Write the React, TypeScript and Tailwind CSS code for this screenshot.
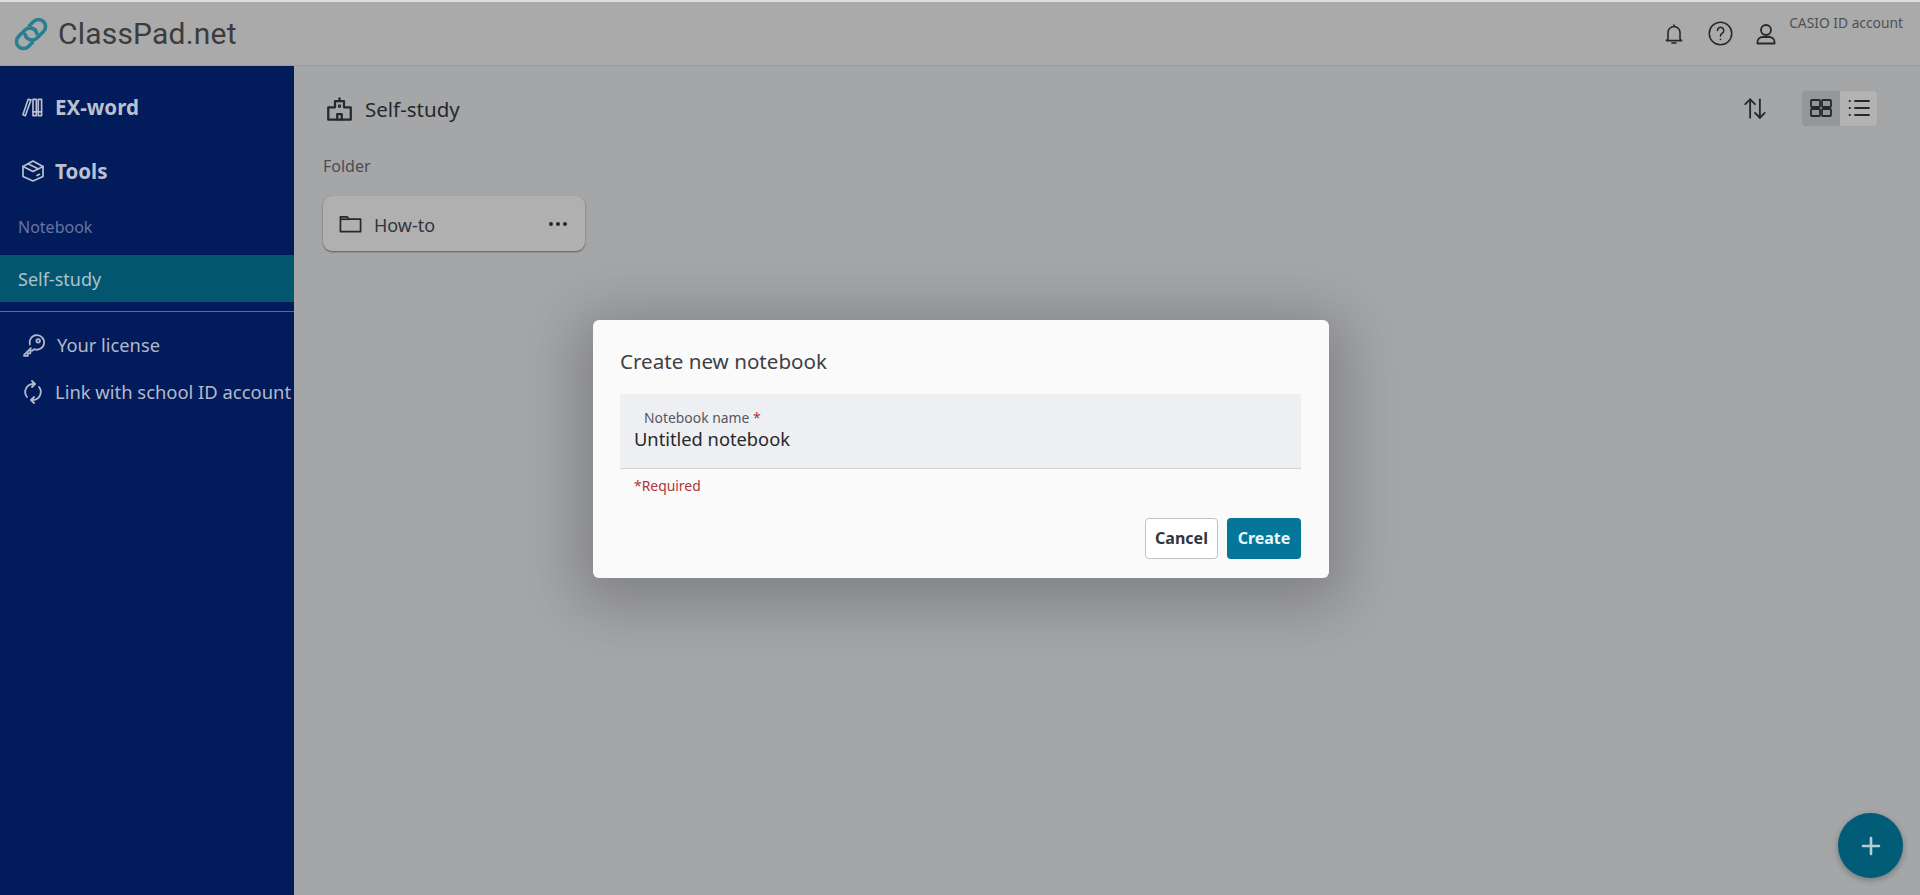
import React from "react";

const Stroke = ({ children, className, vb = "0 0 24 24", sw = 1.6 }: { children: React.ReactNode; className: string; vb?: string; sw?: number }) => (
  <svg viewBox={vb} className={className} fill="none" stroke="currentColor" strokeWidth={sw} strokeLinecap="round" strokeLinejoin="round">{children}</svg>
);

function Logo() {
  return (
    <svg viewBox="0 0 34 34" className="h-[34px] w-[34px] shrink-0" fill="none" stroke="#287f8d" strokeWidth="3.600" strokeLinecap="round">
      <path d="M15.500 8.500 L19.500 4.500 A7 7 0 0 1 29.500 14.500 L23 21 A7 7 0 0 1 11.100 17.300" />
      <path d="M18.500 25.500 L14.500 29.500 A7 7 0 0 1 4.500 19.500 L11 13 A7 7 0 0 1 22.900 16.700" />
    </svg>
  );
}

export default function App() {
  return (
    <div className="relative flex h-[895px] w-[1920px] flex-col overflow-hidden bg-[#a5a6a8] font-['Noto_Sans',sans-serif] text-[#26282c]">
      <header className="flex h-[66px] shrink-0 items-center border-t-2 border-b border-t-[#dddddd] border-b-[#9b9c9e] bg-[#aaaaab] pl-[14px]">
        <Logo />
        <span className="ml-[10px] font-['Roboto',sans-serif] text-[30px] leading-none tracking-[0.2px] text-[#3b3c3e]">ClassPad.net</span>
        <div className="ml-auto flex items-center pr-[17px]">
          <Stroke className="h-[24px] w-[24px]">
            <path d="M6 17V10.500a6 6 0 0 1 12 0V17l1.600 1.600H4.400L6 17Z" /><path d="M10 21h4" /><path d="M12 3v1.400" />
          </Stroke>
          <Stroke className="ml-[21px] h-[27px] w-[27px]" sw={1.4}>
            <circle cx="12" cy="12" r="10" /><path d="M9.300 9.300a2.800 2.800 0 1 1 4.300 2.400c-1 .7-1.600 1.300-1.600 2.500" /><path d="M12 17.200v.1" />
          </Stroke>
          <Stroke className="ml-[20px] h-[24px] w-[24px]" sw={1.8}>
            <circle cx="12" cy="8" r="5" /><path d="M3.500 21.500v-1.500c0-3 2.500-5 5-5h7c2.500 0 5 2 5 5v1.500Z" />
          </Stroke>
          <span className="mb-[22px] ml-[11px] text-[13.800px] leading-5 text-[#4f5053]">CASIO ID account</span>
        </div>
      </header>

      <div className="flex min-h-0 flex-1">
        <aside className="flex w-[294px] shrink-0 flex-col bg-[#021c5b]">
          <div className="mt-[26px] flex h-[30px] items-center pl-[21px] text-[#bac0ce]">
            <Stroke className="h-[23px] w-[23px]" sw={1.700}>
              <path d="M7.500 3.500 2 19.500l2.500 1 6-16.500-3-.5Z" /><path d="M12.500 3.500h3.500v17h-3.500Z" /><path d="M18 3.500h3.500v17H18Z" /><path d="M12.500 16.500h9" />
            </Stroke>
            <span className="ml-[11px] text-[20.500px] font-bold leading-none">EX-word</span>
          </div>
          <div className="mt-[34px] flex h-[30px] items-center pl-[21px] text-[#bac0ce]">
            <Stroke className="h-[24px] w-[24px]" sw={1.700}>
              <path d="M12 2 22 7.500v10L12 22 2 17.500v-10L12 2Z" /><path d="M2 7.500 12 12.500 22 7.500" /><path d="M7 4.800l10 5" /><path d="M16 16.500l2.500-1.200" />
            </Stroke>
            <span className="ml-[10px] text-[20.500px] font-bold leading-none">Tools</span>
          </div>
          <div className="mt-[29px] h-[24px] pl-[18px] text-[16px] leading-6 text-[#6676a0]">Notebook</div>
          <div className="mt-[16px] flex h-[47px] items-center bg-[#03566f] pl-[18px] pt-[2px] text-[18px] text-[#aec2cb]">Self-study</div>
          <div className="mt-[9px] h-px bg-[#5c6c92]" />
          <div className="mt-[18px] flex h-[30px] items-center pl-[21px] text-[#b4b9c9]">
            <Stroke className="h-[25px] w-[25px]" sw={1.700}>
              <path d="M9.500 14.500 3 21v1h3.500v-2.500H9v-2.500h2l1.500-1.500a7 7 0 1 0-4-4.500" /><circle cx="16.500" cy="7.500" r="1.700" />
            </Stroke>
            <span className="ml-[11px] text-[18.300px] leading-none">Your license</span>
          </div>
          <div className="mt-[17px] flex h-[30px] items-center pl-[21px] text-[#b4b9c9]">
            <Stroke className="h-[24px] w-[24px]" sw={1.800}>
              <path d="M6 17a8 8 0 0 1 6-13l1.500 0" /><path d="M11 1l3 3-3 3" /><path d="M18 7a8 8 0 0 1-6 13l-1.500 0" /><path d="M13 23l-3-3 3-3" />
            </Stroke>
            <span className="ml-[10px] whitespace-nowrap text-[18.400px] leading-none">Link with school ID account</span>
          </div>
        </aside>

        <main className="flex min-w-0 flex-1 flex-col pl-[29px] pr-[42px]">
          <div className="mt-[27px] flex h-[30px] items-center">
            <Stroke className="ml-[3px] mt-[2px] h-[27px] w-[27px]" sw={2}>
              <path d="M2 21V10h6V4.500h8V10h6v11H2Z" /><path d="M10 21v-5h4v5" /><path d="M12 4.500V2" /><circle cx="12" cy="9" r=".6" />
            </Stroke>
            <span className="ml-[12px] mt-[2px] text-[20.500px] leading-none">Self-study</span>
            <Stroke className="ml-auto h-[26px] w-[26px]" sw={1.700}>
              <path d="M7.500 21V4" /><path d="M3 8.500 7.500 4 12 8.500" /><path d="M16.500 4v17" /><path d="M12 16.500l4.500 4.500 4.500-4.500" />
            </Stroke>
            <div className="ml-[33px] flex h-[37px] w-[77px] overflow-hidden rounded-[5px] border border-[#a0a1a3]">
              <div className="flex w-[38px] items-center justify-center bg-[#959698]">
                <Stroke className="h-[24px] w-[24px]" sw={1.800}>
                  <rect x="2" y="4" width="9" height="7" rx="1" /><rect x="13" y="4" width="9" height="7" rx="1" /><rect x="2" y="13" width="9" height="7" rx="1" /><rect x="13" y="13" width="9" height="7" rx="1" />
                </Stroke>
              </div>
              <div className="flex flex-1 items-center justify-center bg-[#b3b3b4]">
                <Stroke className="h-[24px] w-[24px]" sw={1.800}>
                  <path d="M8 5h14M8 12h14M8 19h14" /><path d="M2.500 5h.5M2.500 12h.5M2.500 19h.5" />
                </Stroke>
              </div>
            </div>
          </div>
          <div className="mt-[32px] h-[22px] text-[16px] leading-[22px] text-[#4c4d4f]">Folder</div>
          <div className="mt-[19px] flex h-[55px] w-[262px] items-center rounded-[9px] bg-[#b0b0b1] pl-[16px] pr-[18px] pt-[3px] shadow-[0_1px_2px_rgba(0,0,0,0.45)]">
            <svg viewBox="0 0 24 20" className="mb-[2px] h-[20px] w-[23px]" fill="none" stroke="currentColor" strokeWidth="1.800" strokeLinejoin="round">
              <path d="M1.500 18V2.500h7l2 2.500h12v13Z" /><path d="M1.500 5h9" />
            </svg>
            <span className="ml-[12px] text-[18px] leading-none text-[#33353a]">How-to</span>
            <div className="ml-auto mb-[3px] flex gap-[3px]">
              <span className="h-[4px] w-[4px] rounded-full bg-[#26282c]" />
              <span className="h-[4px] w-[4px] rounded-full bg-[#26282c]" />
              <span className="h-[4px] w-[4px] rounded-full bg-[#26282c]" />
            </div>
          </div>
        </main>
      </div>

      <div className="absolute inset-0 flex items-center justify-center pl-[2px] pt-[3px]">
        <div className="flex h-[258px] w-[736px] flex-col rounded-[6px] bg-[#fafafb] pl-[27px] pr-[28px] shadow-[0_12px_60px_16px_rgba(0,0,0,0.22)]">
          <h2 className="mt-[27px] text-[20.600px] font-normal leading-[28px] text-[#3f4145]">Create new notebook</h2>
          <div className="mt-[19px] flex h-[75px] flex-col border-b border-[#d3d4d8] bg-[#eeeff3] pl-[14px] pt-[14px]">
            <div className="pl-[10px] text-[13.900px] leading-[19px] text-[#55575c]">Notebook name <span className="text-[#b0353b]">*</span></div>
            <div className="text-[18.300px] leading-[23px] text-[#26282c]">Untitled notebook</div>
          </div>
          <div className="mt-[7px] pl-[14px] text-[13.900px] leading-5 text-[#b0353b]">*Required</div>
          <div className="mt-[22px] flex justify-end gap-[9px]">
            <button className="h-[41px] w-[73px] rounded-[4px] border border-[#c2c3c6] bg-white pb-[2px] text-[16px] font-bold text-[#33353a]">Cancel</button>
            <button className="h-[41px] w-[74px] rounded-[4px] bg-[#04769a] pb-[2px] text-[16px] font-bold text-[#eef6f9]">Create</button>
          </div>
        </div>
      </div>

      <div className="absolute bottom-[17px] right-[17px] flex h-[65px] w-[65px] items-center justify-center rounded-full bg-[#015c78] shadow-[0_2px_6px_rgba(0,0,0,0.3)]">
        <Stroke className="h-[24px] w-[24px] text-[#b9cdd5]" sw={2.600}>
          <path d="M12 4v16M4 12h16" />
        </Stroke>
      </div>
    </div>
  );
}
